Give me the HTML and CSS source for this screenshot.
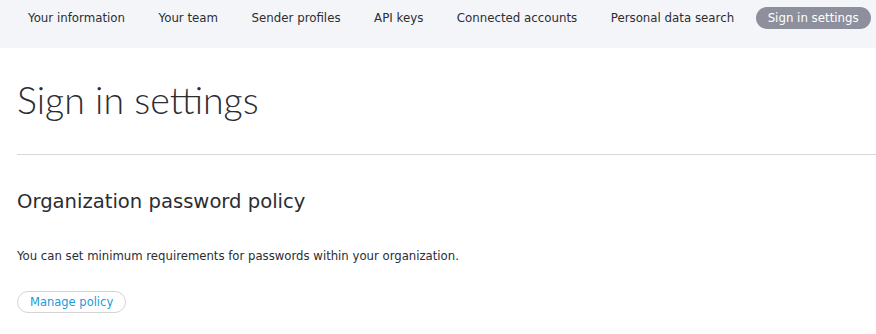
FILE: index.html
```html
<!DOCTYPE html>
<html lang="en">
<head>
  <meta charset="UTF-8">
  <title>Sign in settings</title>
  <link rel="stylesheet" href="styles.css">
</head>
<body>
  <!-- Settings tabs -->
  <nav class="tabs">
    <a class="tab" href="#">Your information</a>
    <a class="tab" href="#">Your team</a>
    <a class="tab" href="#">Sender profiles</a>
    <a class="tab" href="#">API keys</a>
    <a class="tab" href="#">Connected accounts</a>
    <a class="tab" href="#">Personal data search</a>
    <a class="tab active" href="#">Sign in settings</a>
  </nav>

  <main class="content">
    <h1 class="page-title">Sign in settings</h1>
    <hr class="divider">

    <!-- Password policy section -->
    <section class="policy">
      <h2 class="section-title">Organization password policy</h2>
      <p class="section-text">You can set minimum requirements for passwords within your organization.</p>
      <button class="pill-button">Manage policy</button>
    </section>
  </main>
</body>
</html>
```

FILE: styles.css
```css
body {
  margin: 0;
  background: #ffffff;
  color: #2b2d33;
  font-family: "DejaVu Sans", Verdana, sans-serif;
}
/* Tab bar across the top */
.tabs {
  display: flex;
  align-items: center;
  gap: 9.5px;
  height: 48px;
  padding: 0 8px 12px 16px;
  box-sizing: border-box;
  background: #f4f5f9;
}
.tab {
  padding: 4px 12px;
  border-radius: 11px;
  font-size: 11.8px;
  line-height: 14px;
  color: #2b2d33;
  text-decoration: none;
  white-space: nowrap;
}
.tab.active {
  background: #8e8f9c;
  color: #ffffff;
}
.content {
  padding-left: 17px;
}
.page-title {
  margin: 0;
  padding-top: 28px;
  font-family: Lato, sans-serif;
  font-weight: 300;
  font-size: 37.5px;
  line-height: 48px;
  color: #2b2d33;
}
.divider {
  margin: 30px 0 0;
  border: 0;
  border-top: 1px solid #d8d8d8;
}
.section-title {
  margin: 35px 0 0;
  font-weight: normal;
  font-size: 19.6px;
  line-height: 24px;
}
.section-text {
  margin: 35px 0 0;
  font-size: 11.7px;
  line-height: 14px;
}
.pill-button {
  margin-top: 28px;
  padding: 3px 12px;
  border: 1px solid #d4d4d4;
  border-radius: 11px;
  background: #ffffff;
  color: #1a9bd7;
  font-family: "DejaVu Sans", Verdana, sans-serif;
  font-size: 11.5px;
  line-height: 14px;
}
```
